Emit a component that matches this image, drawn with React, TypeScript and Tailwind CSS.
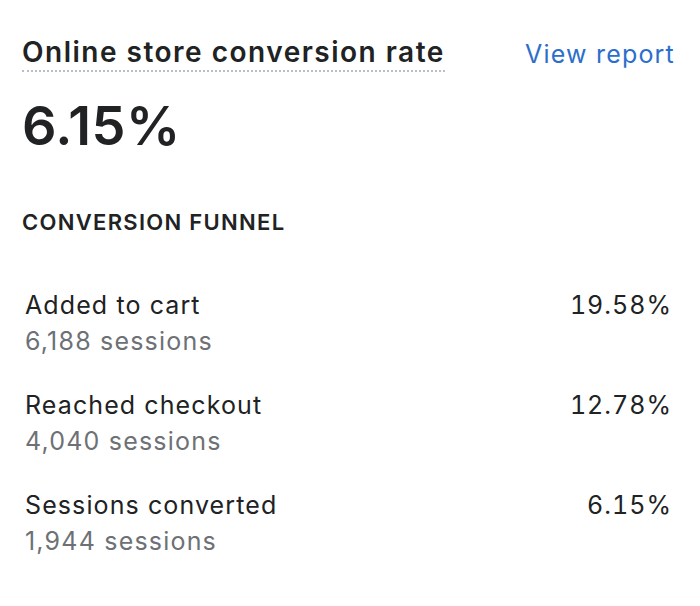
import React from 'react';

const rows = [
  { label: 'Added to cart', sessions: '6,188 sessions', rate: '19.58%' },
  { label: 'Reached checkout', sessions: '4,040 sessions', rate: '12.78%' },
  { label: 'Sessions converted', sessions: '1,944 sessions', rate: '6.15%' },
];

export default function App() {
  return (
    <div className="h-[606px] w-[700px] bg-white font-['Inter',sans-serif] text-[#202223]">
      <div className="pl-[22px] pr-[25px] pt-[36px]">
        <div className="flex items-start justify-between">
          <h2 className="border-b-2 border-dotted border-[#b9bfc8] pb-[2px] text-[28px] font-semibold leading-[32px] tracking-[1.5px]">
            Online store conversion rate
          </h2>
          <a className="text-[25px] leading-[36px] tracking-[1.2px] text-[#2c6ecb]" href="#">
            View report
          </a>
        </div>

        <p className="mt-[24px] text-[54px] font-semibold leading-[60px] tracking-[0.5px]">6.15%</p>

        <h3 className="mt-[52px] text-[22px] font-semibold uppercase leading-[28px] tracking-[1.3px]">
          Conversion funnel
        </h3>

        <ul className="mt-[51px] flex flex-col gap-[28px] px-[3px]">
          {rows.map((row) => (
            <li key={row.label} className="flex items-start justify-between">
              <div className="flex flex-col">
                <span className="text-[25px] leading-[36px] tracking-[1.1px]">{row.label}</span>
                <span className="text-[25px] leading-[36px] tracking-[1.2px] text-[#6d7175]">{row.sessions}</span>
              </div>
              <span className="text-[25px] leading-[36px] tracking-[1px] tabular-nums">{row.rate}</span>
            </li>
          ))}
        </ul>
      </div>
    </div>
  );
}
